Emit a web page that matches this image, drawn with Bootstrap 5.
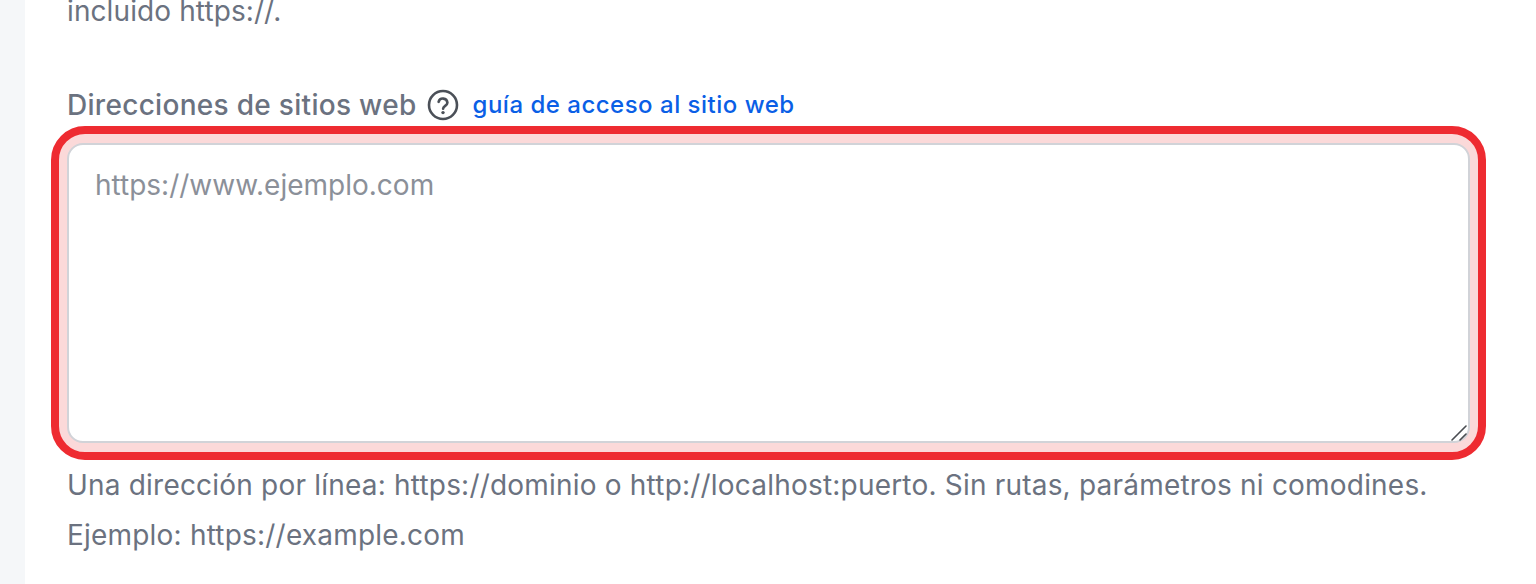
<!DOCTYPE html>
<html lang="es">
<head>
<meta charset="utf-8">
<title>Direcciones de sitios web</title>
<link href="https://cdn.jsdelivr.net/npm/bootstrap@5.3.0/dist/css/bootstrap.min.css" rel="stylesheet">
<style>
html,body{height:584px;overflow:hidden}
body{background:#f5f7f9;font-family:Inter,"Liberation Sans",sans-serif;color:#6b7280;}
.sheet{margin-left:25px;height:584px;background:#fff;padding-left:42px;padding-right:66px;overflow:hidden}
.clipline{font-size:28px;line-height:40px;margin:-9px 0 0;color:#6b7280;letter-spacing:.1px}
.field-head{margin-top:54px;height:40px;gap:10px}
.field-name{font-size:28px;line-height:40px;font-weight:500;color:#6b7280;letter-spacing:.3px}
.field-link{font-size:24px;line-height:40px;font-weight:500;color:#0a5fe6;text-decoration:none;margin-left:4px;letter-spacing:.5px}
.ring{position:relative;margin:1px -16px 0 -16px;border:8px solid #ee2b31;border-radius:34px;background:#fbd9d9;padding:9px 8px 9px 8px;height:334px}
.ring textarea{display:block;height:100%;resize:none;border:2px solid #d1d3d8;border-radius:16px;background:#fff;font-family:inherit;font-size:28px;line-height:40px;padding:20px 26px;color:#6b7280;box-shadow:none}
.ring textarea::placeholder{color:#8b9099;opacity:1}
.grip{position:absolute;right:9px;bottom:10px;width:18px;height:18px}
.helpline{font-size:28px;line-height:50px;margin:0;color:#6b7280;white-space:nowrap;letter-spacing:.2px}
</style>
</head>
<body>
<div class="sheet">
  <p class="clipline">incluido https://.</p>
  <div class="field-head d-flex align-items-center">
    <label class="field-name" for="sites">Direcciones de sitios web</label>
    <svg width="32" height="32" viewBox="0 0 32 32" fill="none" aria-hidden="true"><circle cx="16" cy="16" r="14" stroke="#4b5058" stroke-width="2.6"/><path d="M11.6 12.8a4.5 4.5 0 0 1 8.8.9c0 3-4.3 3.3-4.3 6" stroke="#4b5058" stroke-width="2.6" stroke-linecap="round"/><circle cx="16" cy="23.6" r="1.7" fill="#4b5058"/></svg>
    <a class="field-link" href="#">guía de acceso al sitio web</a>
  </div>
  <div class="ring">
    <textarea id="sites" class="form-control" placeholder="https://www.ejemplo.com"></textarea>
    <svg class="grip" viewBox="0 0 18 18" aria-hidden="true"><path d="M1 16 15 2M9 16l6-6" stroke="#4a4d52" stroke-width="1.6" stroke-linecap="round"/></svg>
  </div>
  <p class="helpline">Una dirección por línea: https://dominio o http://localhost:puerto. Sin rutas, parámetros ni comodines.</p>
  <p class="helpline">Ejemplo: https://example.com</p>
</div>
<script src="https://cdn.jsdelivr.net/npm/bootstrap@5.3.0/dist/js/bootstrap.bundle.min.js"></script>
</body>
</html>
